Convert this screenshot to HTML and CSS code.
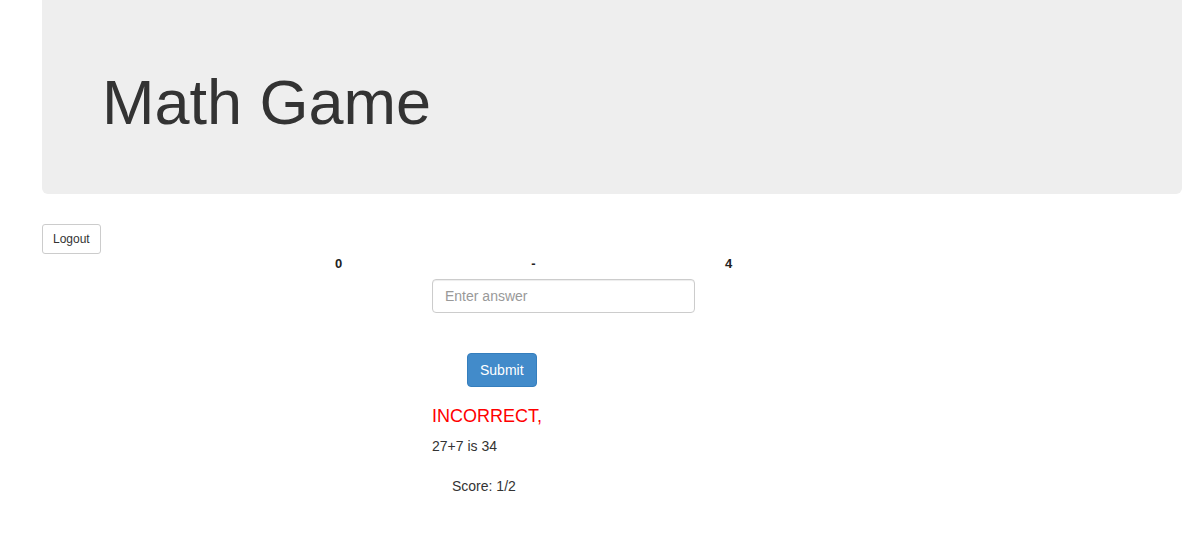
FILE: index.html
```html
<!DOCTYPE html>
<html>
<head>
<meta charset="utf-8">
<title>Math Game</title>
<link rel="stylesheet" href="styles.css">
</head>
<body>
<div class="page">
  <div class="jumbotron">
    <h1 class="title">Math Game</h1>
  </div>
  <button class="btn btn-default btn-sm">Logout</button>
  <div class="problem">
    <div class="cell">0</div>
    <div class="cell">-</div>
    <div class="cell">4</div>
  </div>
  <div class="game">
    <input class="answer" type="text" placeholder="Enter answer">
    <button class="btn btn-primary submit">Submit</button>
    <div class="result">INCORRECT,</div>
    <div class="correction">27+7 is 34</div>
    <div class="score">Score: 1/2</div>
  </div>
</div>
</body>
</html>
```

FILE: styles.css
```css
* { box-sizing: border-box; }
html, body {
  margin: 0;
  padding: 0;
  background: #fff;
  font-family: "Liberation Sans", Arial, sans-serif;
  font-size: 14px;
  line-height: 20px;
  color: #333;
}
.page {
  padding: 0 22px 0 42px;
}
.jumbotron {
  background: #eeeeee;
  border-radius: 0 0 6px 6px;
  padding: 48px 60px;
}
.title {
  margin: 20px 0 9px;
  font-size: 63px;
  line-height: 69px;
  font-weight: 400;
  color: #333;
}
.btn {
  display: inline-block;
  font-family: "Liberation Sans", Arial, sans-serif;
  border: 1px solid transparent;
  border-radius: 4px;
  cursor: pointer;
}
.btn-sm {
  font-size: 12px;
  line-height: 18px;
  padding: 5px 10px;
  height: 30px;
  border-radius: 3px;
}
.btn-default {
  background: #fff;
  color: #333;
  border-color: #ccc;
  margin-top: 30px;
}
.problem {
  display: grid;
  grid-template-columns: 195px 195px 195px;
  margin-left: 199px;
  font-size: 13px;
  font-weight: 700;
  line-height: 20px;
  color: #222;
}
.cell {
  text-align: center;
}
.game {
  display: flex;
  flex-direction: column;
  align-items: flex-start;
  margin-left: 390px;
}
.answer {
  margin-top: 5px;
  width: 263px;
  height: 34px;
  padding: 6px 12px;
  font-family: "Liberation Sans", Arial, sans-serif;
  font-size: 14px;
  color: #555;
  border: 1px solid #ccc;
  border-radius: 4px;
  box-shadow: inset 0 1px 1px rgba(0,0,0,0.075);
  outline: none;
}
.answer::placeholder {
  color: #999;
}
.btn-primary {
  background: #428bca;
  border-color: #357ebd;
  color: #fff;
  font-size: 14px;
  line-height: 20px;
  padding: 6px 12px;
  height: 34px;
}
.submit {
  margin-top: 40px;
  margin-left: 35px;
}
.result {
  margin-top: 19px;
  font-size: 18px;
  line-height: 20px;
  color: #ff0000;
}
.correction {
  margin-top: 10px;
  font-size: 14px;
  line-height: 20px;
}
.score {
  margin-top: 20px;
  padding-left: 20px;
  font-size: 14px;
  line-height: 20px;
}
```
